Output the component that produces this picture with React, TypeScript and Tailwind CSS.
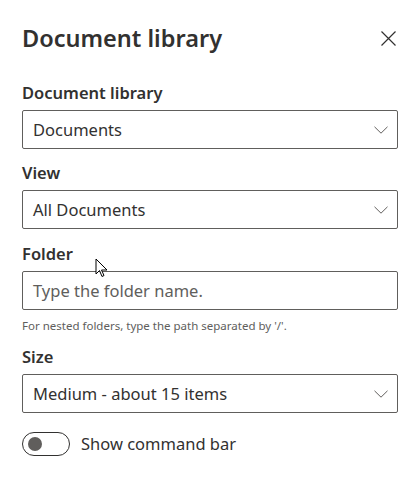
const font = { fontFamily: '"Segoe UI", "Noto Sans", "Open Sans", sans-serif' };

function Chevron() {
  return (
    <svg width="14" height="8" viewBox="0 0 14 8" className="text-[#605e5c]">
      <path d="M0.5 0.8l6.5 6.4 6.5-6.4" fill="none" stroke="currentColor" strokeWidth="1" />
    </svg>
  );
}

function Dropdown({ value }: { value: string }) {
  return (
    <div className="flex h-[39px] items-center justify-between rounded-[2px] border border-[#605e5c] pl-[10px] pr-[9px] text-[16.5px] text-[#323130]">
      <span className="mt-[1px]">{value}</span>
      <Chevron />
    </div>
  );
}

function Label({ children }: { children: string }) {
  return <div className="mb-[6px] text-[16.5px] font-semibold leading-[22px] text-[#323130]">{children}</div>;
}

export default function App() {
  return (
    <div className="relative h-[478px] w-[420px] bg-white px-[22px] pt-[22px]" style={font}>
      <div className="flex items-start justify-between">
        <h1 className="text-[23.5px] font-semibold leading-[32px] text-[#323130]">Document library</h1>
        <button type="button" className="mr-[2px] mt-[9px] text-[#323130]">
          <svg width="15" height="15" viewBox="0 0 15 15">
            <path d="M0.5 0.5l14 14M14.5 0.5l-14 14" stroke="currentColor" strokeWidth="1.2" />
          </svg>
        </button>
      </div>

      <div className="mt-[28px]">
        <Label>Document library</Label>
        <Dropdown value="Documents" />
      </div>

      <div className="mt-[13px]">
        <Label>View</Label>
        <Dropdown value="All Documents" />
      </div>

      <div className="mt-[14px]">
        <Label>Folder</Label>
        <div className="flex h-[39px] items-center rounded-[2px] border border-[#605e5c] px-[10px] text-[16.5px] text-[#605e5c]">
          <span className="mt-[1px]">Type the folder name.</span>
        </div>
        <div className="mt-[8px] text-[11.5px] leading-[16px] text-[#605e5c]">
          For nested folders, type the path separated by '/'.
        </div>
      </div>

      <div className="mt-[12px]">
        <Label>Size</Label>
        <Dropdown value="Medium - about 15 items" />
      </div>

      <div className="mt-[19px] flex items-center gap-[11px]">
        <div className="flex h-[24px] w-[48px] items-center rounded-full border border-[#323130] px-[5px]">
          <div className="h-[14px] w-[14px] rounded-full bg-[#605e5c]" />
        </div>
        <span className="text-[16.5px] text-[#323130]">Show command bar</span>
      </div>

      <svg className="absolute left-[95px] top-[258px]" width="14" height="20" viewBox="0 0 14 20">
        <path d="M1 1v15l3.5-3.5 2.5 6 2-1-2.5-5.5H12z" fill="white" stroke="black" strokeWidth="1" />
      </svg>
    </div>
  );
}
